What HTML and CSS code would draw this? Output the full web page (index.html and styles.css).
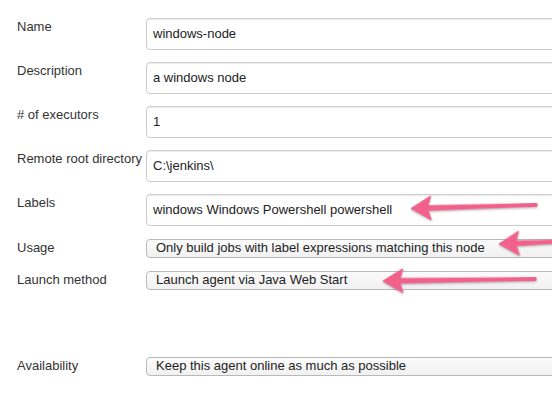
FILE: index.html
```html
<!DOCTYPE html>
<html lang="en">
<head>
<meta charset="utf-8">
<title>Node configuration</title>
<link rel="stylesheet" href="styles.css">
</head>
<body>
<div class="form">
  <div class="row">
    <label class="lbl">Name</label>
    <div class="field"><input class="text" type="text" value="windows-node"></div>
  </div>
  <div class="row">
    <label class="lbl">Description</label>
    <div class="field"><input class="text" type="text" value="a windows node"></div>
  </div>
  <div class="row">
    <label class="lbl"># of executors</label>
    <div class="field"><input class="text" type="text" value="1"></div>
  </div>
  <div class="row">
    <label class="lbl">Remote root directory</label>
    <div class="field"><input class="text" type="text" value="C:\jenkins\"></div>
  </div>
  <div class="row">
    <label class="lbl">Labels</label>
    <div class="field"><input class="text" type="text" value="windows Windows Powershell powershell"></div>
  </div>
  <div class="row sel-row">
    <label class="lbl">Usage</label>
    <div class="field"><div class="select">Only build jobs with label expressions matching this node</div></div>
  </div>
  <div class="row sel-row">
    <label class="lbl">Launch method</label>
    <div class="field"><div class="select">Launch agent via Java Web Start</div></div>
  </div>
  <div class="spacer"></div>
  <div class="row sel-row">
    <label class="lbl">Availability</label>
    <div class="field"><div class="select">Keep this agent online as much as possible</div></div>
  </div>
</div>
<svg class="annotations" width="552" height="408" viewBox="0 0 552 408" aria-hidden="true">
  <g class="arrow" transform="translate(411 208.5) rotate(-1.64)">
    <path d="M0 0 L20 -12 L17 -2.2 L126 -1.4 L126 1.4 L17 2.2 L20 12 Z"/>
  </g>
  <g class="arrow" transform="translate(499 244) rotate(-2.3)">
    <path d="M0 0 L20 -12 L17 -2.2 L70 -1.5 L70 1.5 L17 2.2 L20 12 Z"/>
  </g>
  <g class="arrow" transform="translate(383 281) rotate(-0.75)">
    <path d="M0 0 L20 -12 L17 -2.2 L153 -1.4 L153 1.4 L17 2.2 L20 12 Z"/>
  </g>
</svg>
</body>
</html>
```

FILE: styles.css
```css
html, body {
  margin: 0;
  padding: 0;
}

body {
  width: 552px;
  height: 408px;
  overflow: hidden;
  position: relative;
  background: #fff;
  color: #333;
  font-family: "Liberation Sans", Arial, sans-serif;
  font-size: 13px;
}

.form {
  display: flex;
  flex-direction: column;
  gap: 12px;
  padding: 18px 0 0 17px;
}

.row {
  display: flex;
  align-items: flex-start;
}

.sel-row {
  align-items: baseline;
  margin-top: 1px;
}

.lbl {
  flex: none;
  width: 129px;
  padding-top: 0;
  line-height: 17px;
  color: #333;
  white-space: nowrap;
}

.field {
  flex: none;
  width: 430px;
}

.text {
  display: block;
  box-sizing: border-box;
  width: 100%;
  height: 32px;
  margin: 0;
  padding: 0 6px 1px;
  border: 1px solid #cccccc;
  border-radius: 4px;
  box-shadow: inset 0 1px 1px rgba(0, 0, 0, 0.075);
  background: #fff;
  color: #222;
  font-family: inherit;
  font-size: 13px;
  outline: none;
}

.select {
  box-sizing: border-box;
  height: 19px;
  padding: 0 9px;
  border: 1px solid #b9b9b9;
  border-radius: 4px;
  background: linear-gradient(#fbfbfb, #f1f1f1);
  color: #222;
  line-height: 15px;
  white-space: nowrap;
  overflow: hidden;
}

.spacer {
  height: 42px;
}

.annotations {
  position: absolute;
  left: 0;
  top: 0;
  pointer-events: none;
}

.arrow path {
  fill: #f2608c;
  stroke: #f2608c;
  stroke-width: 1;
  stroke-linejoin: round;
  filter: drop-shadow(0 1px 1px rgba(0, 0, 0, 0.3));
}
```
